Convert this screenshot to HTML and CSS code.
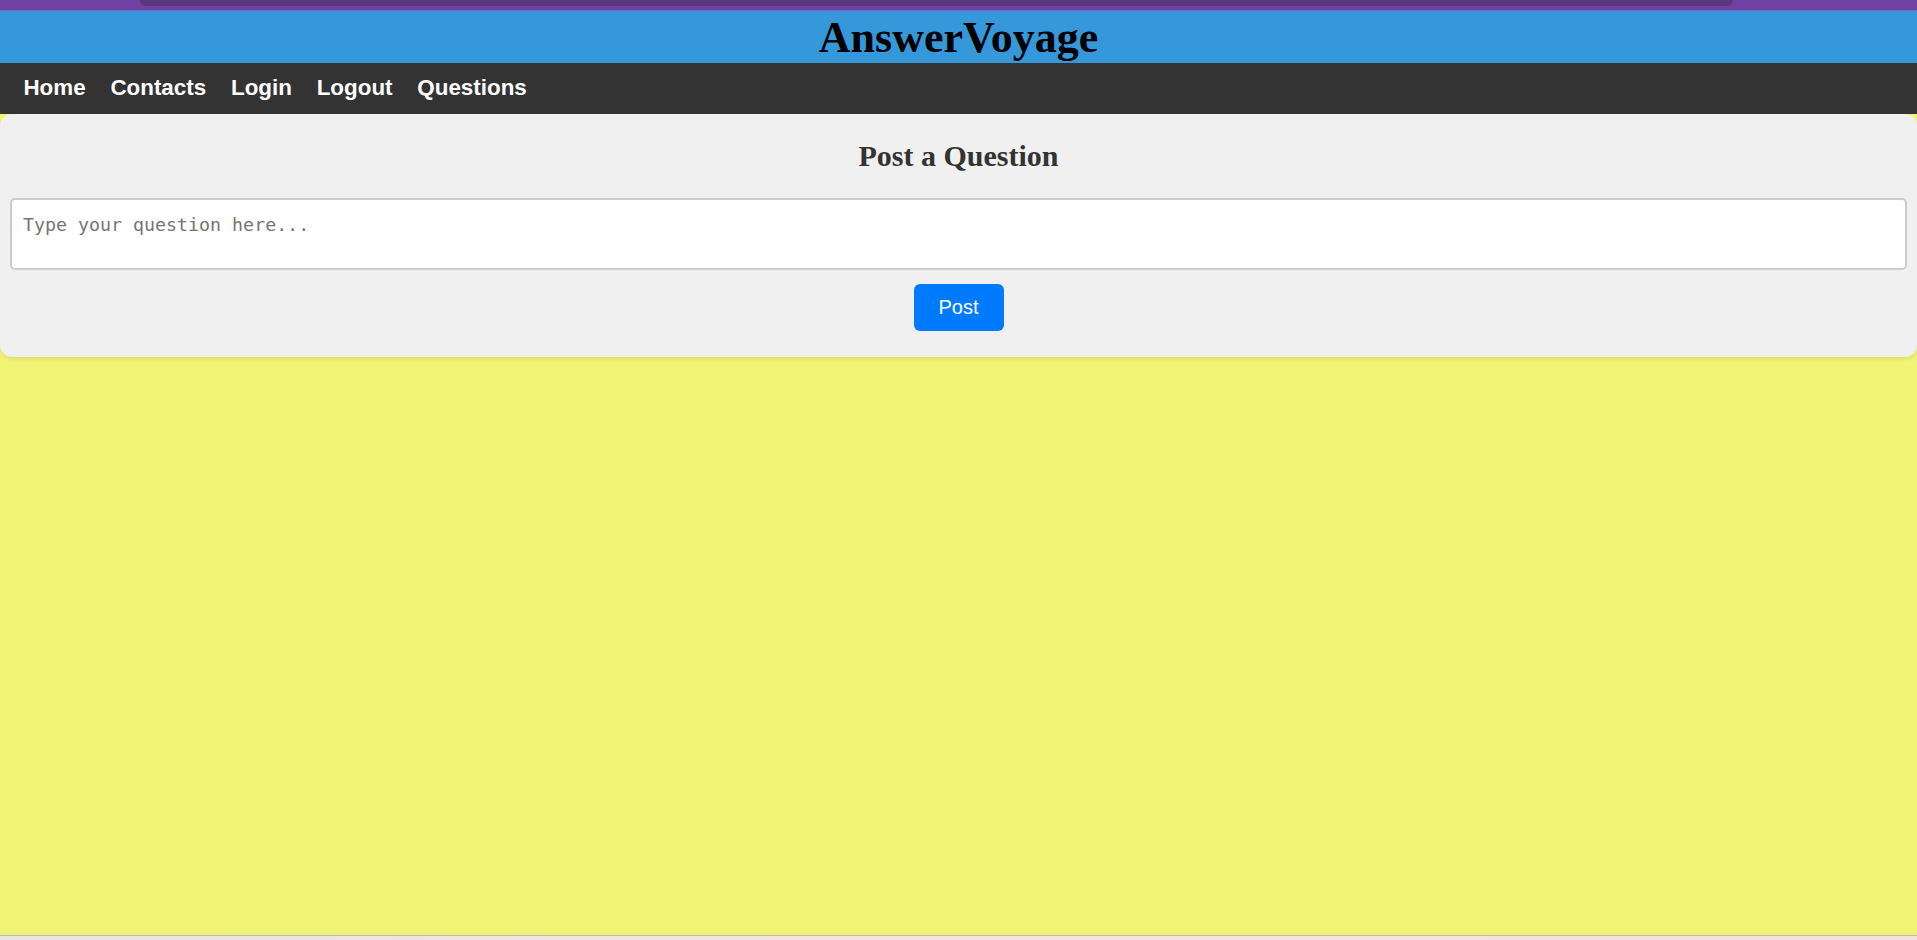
FILE: index.html
```html
<!DOCTYPE html>
<html lang="en">
<head>
<meta charset="utf-8">
<title>AnswerVoyage</title>
<link rel="stylesheet" href="styles.css">
</head>
<body>
<div class="page">
  <div class="topstrip"><div class="topstrip-tab"></div></div>
  <header class="banner"><h1 class="brand">AnswerVoyage</h1></header>
  <nav class="nav">
    <a class="nav-link" href="#">Home</a>
    <a class="nav-link" href="#">Contacts</a>
    <a class="nav-link" href="#">Login</a>
    <a class="nav-link" href="#">Logout</a>
    <a class="nav-link" href="#">Questions</a>
  </nav>
  <main class="main">
    <section class="card">
      <h2 class="card-title">Post a Question</h2>
      <textarea class="question-input" placeholder="Type your question here..."></textarea>
      <div class="actions"><button class="post-btn" type="button">Post</button></div>
    </section>
  </main>
  <div class="bottomstrip"></div>
</div>
</body>
</html>
```

FILE: styles.css
```css
html, body {
  margin: 0;
  padding: 0;
  height: 100%;
}
body {
  background: #f0f373;
  font-family: "Liberation Sans", Arial, sans-serif;
}
.page {
  display: flex;
  flex-direction: column;
  height: 100%;
}
.topstrip {
  height: 10px;
  background: #6f42a1;
  border-bottom: 1px solid #8b5fc7;
  padding: 0 184px 0 140px;
  box-sizing: content-box;
  display: flex;
}
.topstrip-tab {
  flex: 1;
  height: 6px;
  background: #5a387f;
  border-radius: 0 0 7px 7px;
}
.banner {
  background: #3498db;
  height: 52px;
  display: flex;
  align-items: center;
  justify-content: center;
}
.brand {
  margin: 0;
  font-family: "Liberation Serif", "Times New Roman", serif;
  font-weight: bold;
  font-size: 44px;
  line-height: 1;
  color: #000;
  transform: translateY(1px);
}
.nav {
  background: #333333;
  height: 51px;
  display: flex;
  align-items: center;
  padding: 0 11px;
}
.nav-link {
  color: #fff;
  text-decoration: none;
  font-weight: bold;
  font-size: 22.4px;
  padding: 0 12.4px;
  line-height: 1;
}
.main {
  flex: 1;
}
.card {
  background: #f0f0f0;
  border-radius: 12px;
  box-shadow: 0 2px 4px rgba(0, 0, 0, 0.08);
  padding: 0 10px 26px;
  text-align: center;
}
.card-title {
  margin: 0;
  padding: 25px 0 25px;
  font-family: "Liberation Serif", "Times New Roman", serif;
  font-weight: bold;
  font-size: 30px;
  line-height: 34px;
  color: #333;
}
.question-input {
  display: block;
  box-sizing: border-box;
  width: 100%;
  height: 72px;
  margin: 0 0 14px;
  padding: 14px 11px 10px;
  border: 2px solid #cccccc;
  border-radius: 5px;
  background: #fff;
  font-family: "DejaVu Sans Mono", monospace;
  font-size: 18.3px;
  line-height: 22px;
  resize: none;
  color: #333;
}
.question-input::placeholder {
  color: #757575;
}
.actions {
  display: flex;
  justify-content: center;
}
.post-btn {
  background: #007bff;
  color: #fff;
  border: none;
  border-radius: 6px;
  width: 90px;
  height: 47px;
  font-family: "Liberation Sans", Arial, sans-serif;
  font-size: 20px;
  padding: 0;
  cursor: pointer;
}
.bottomstrip {
  height: 4px;
  border-top: 1px solid #b9b9b9;
  background: linear-gradient(90deg, #e6e6e4 0%, #f3e4e4 30%, #f4e2e2 100%);
}
```
